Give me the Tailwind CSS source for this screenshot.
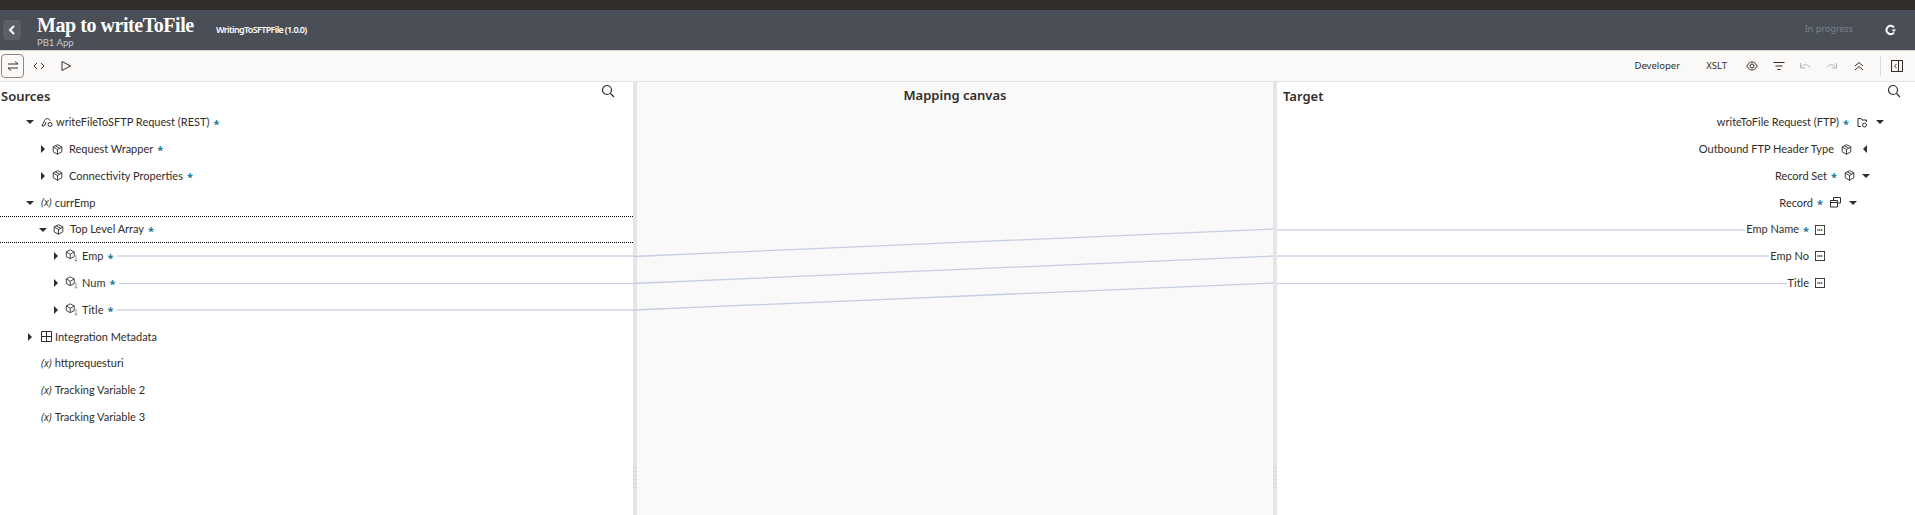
<!DOCTYPE html>
<html lang="en">
<head>
    <meta charset="UTF-8">
    <title>Map to writeToFile</title>
    <script src="https://cdn.jsdelivr.net/npm/@tailwindcss/browser@4"></script>
</head>
<body class="h-[515px] overflow-hidden bg-white font-['Lato',sans-serif] text-[11px] text-[#312d2a]">
    <!-- hidden icon defs -->
    <svg class="hidden">
        <symbol id="cube" viewBox="0 0 12 12"><path d="M6 .8 10.700 3V8.500L6 11.200 1.300 8.500V3ZM1.300 3.300 6 6 10.700 3.300M6 6V11.200M3.600 2 8.300 4.600" fill="none" stroke="currentColor" stroke-width="1"/></symbol>
        <symbol id="cubelist" viewBox="0 0 16 16"><path d="M6 1 10.500 3.300V8.700L6 11 1.500 8.700V3.300ZM1.500 3.300 6 6 10.500 3.300M6 6V11" fill="none" stroke="currentColor" stroke-width="1"/><path d="M12.500 7V14M11 12.500 12.500 14 14 12.500" fill="none" stroke="#888" stroke-width="1"/></symbol>
        <symbol id="abc" viewBox="0 0 11 11"><rect x=".5" y=".5" width="10" height="10" fill="none" stroke="currentColor"/><path d="M2.500 5.500H8.500" stroke="#777" stroke-width="2" stroke-dasharray="1.500 .5"/></symbol>
    </svg>

    <div class="h-[10px] bg-[#312d2a]"></div>

    <!-- title bar -->
    <header class="flex h-[40px] items-center bg-[#4a4e57] text-white">
        <button class="ml-[3px] flex h-[20px] w-[18px] items-center justify-center rounded-sm bg-[#5b5f67]">
            <svg width="8" height="10" viewBox="0 0 8 10"><path d="M6 1 2 5 6 9" fill="none" stroke="white" stroke-width="2"/></svg>
        </button>
        <div class="ml-[16px] w-[179px]">
            <div class="font-['Liberation_Serif',serif] text-[20px] leading-[24px] font-bold tracking-[-0.45px]">Map to writeToFile</div>
            <div class="text-[9.500px] leading-[11px] text-[#c9c9c9]">PB1 App</div>
        </div>
        <div class="mb-[1px] font-['Noto_Sans',sans-serif] text-[9px] font-semibold tracking-[-0.65px]">WritingToSFTPFile (1.0.0)</div>
        <div class="ml-auto mb-[2px] font-['Noto_Sans',sans-serif] text-[9px] text-[#7d8087]">In progress</div>
        <svg class="mr-[19px] ml-[31px]" width="12" height="12" viewBox="0 0 12 12"><path d="M10 3.500A4.200 4.200 0 1 0 10 8.500" fill="none" stroke="white" stroke-width="2"/><path d="M7.500 5.500H12L10 8Z" fill="white"/></svg>
    </header>

    <!-- toolbar -->
    <div class="flex h-[32px] items-center border-y border-y-[#e5e3e1] border-t-[#d8d4c8] bg-[#fbf9f8] pr-[12px]">
        <button class="ml-[1px] flex h-[24px] w-[23px] items-center justify-center rounded-sm border border-[#8a8784]">
            <svg width="12" height="12" viewBox="0 0 12 12"><path d="M1 4H11M8 1.500 11 4M11 8H1M4 10.500 1 8" fill="none" stroke="#312d2a"/></svg>
        </button>
        <svg class="ml-[9px]" width="12" height="12" viewBox="0 0 12 12"><path d="M4 3 1 6 4 9M8 3 11 6 8 9" fill="none" stroke="#312d2a"/></svg>
        <svg class="ml-[15px]" width="12" height="12" viewBox="0 0 12 12"><path d="M2 1.500 10.500 6 2 10.500Z" fill="none" stroke="#312d2a"/></svg>
        <span class="ml-auto font-['Noto_Sans',sans-serif] text-[9.500px]">Developer</span>
        <span class="ml-[26px] font-['Noto_Sans',sans-serif] text-[9.500px]">XSLT</span>
        <svg class="ml-[19px]" width="12" height="12" viewBox="0 0 12 12"><path d="M.8 6C2.500 3 4.200 2 6 2S9.500 3 11.200 6C9.500 9 7.800 10 6 10S2.500 9 .8 6Z" fill="none" stroke="#312d2a"/><circle cx="6" cy="6" r="2" fill="none" stroke="#312d2a"/></svg>
        <svg class="ml-[15px]" width="12" height="12" viewBox="0 0 12 12"><path d="M.5 2.500H11.500M2.500 6H9.500M4.500 9.500H7.500" fill="none" stroke="#312d2a"/></svg>
        <svg class="ml-[14px]" width="12" height="12" viewBox="0 0 12 12"><path d="M1.500 3V8H6.500M1.500 8C4 4 8.500 3.500 11 7.500" fill="none" stroke="#b8b6b4"/></svg>
        <svg class="ml-[15px]" width="12" height="12" viewBox="0 0 12 12"><path d="M10.500 3V8H5.500M10.500 8C8 4 3.500 3.500 1 7.500" fill="none" stroke="#b8b6b4"/></svg>
        <svg class="ml-[15px]" width="12" height="12" viewBox="0 0 12 12"><path d="M2 6 6 2.500 10 6M2 10 6 6.500 10 10" fill="none" stroke="#312d2a"/></svg>
        <div class="mr-[10px] ml-[15px] h-[20px] w-px bg-[#dcdad8]"></div>
        <svg width="12" height="12" viewBox="0 0 12 12"><rect x=".5" y=".5" width="11" height="11" fill="none" stroke="#312d2a"/><path d="M7.500 .5V11.500M5.500 4 3.500 6 5.500 8" fill="none" stroke="#312d2a"/></svg>
    </div>

    <!-- mapper -->
    <main class="relative flex h-[434px]">
        <!-- sources -->
        <section class="relative w-[633px] shrink-0">
            <div class="relative flex h-[24px] items-end pl-[1px] font-['Noto_Sans',sans-serif]">
                <h2 class="text-[13px] leading-[19px] font-semibold">Sources</h2>
                <svg class="absolute top-[2px] right-[18px]" width="14" height="14" viewBox="0 0 14 14"><circle cx="6" cy="6" r="4.500" fill="none" stroke="#312d2a" stroke-width="1.200"/><path d="M9.500 9.500 13 13" stroke="#312d2a" stroke-width="1.200"/></svg>
            </div>
            <div class="flex flex-col pt-[3px]">
                <div class="flex h-[26.800px] items-center pl-[26px]">
                    <span class="mr-[7px] h-0 w-0 border-x-[4px] border-t-[4px] border-x-transparent border-t-[#312d2a]"></span>
                    <svg class="mr-[3px]" width="12" height="11" viewBox="0 0 12 11"><path d="M3 9H1L3.500 3.500C4.500 1 8 1 9 3.500M5 5 3.500 9" fill="none" stroke="#312d2a"/><circle cx="9" cy="7.500" r="2" fill="none" stroke="#312d2a"/></svg>
                    <span>writeFileToSFTP Request (REST)</span><span class="mt-[3px] ml-[4px] font-['Noto_Sans',sans-serif] text-[11px] font-bold text-[#15799b]">*</span>
                </div>
                <div class="flex h-[26.800px] items-center pl-[41px]">
                    <span class="mr-[7px] h-0 w-0 border-y-[4px] border-l-[4px] border-y-transparent border-l-[#312d2a]"></span>
                    <svg class="mr-[6px] h-[11px] w-[11px]"><use href="#cube"/></svg>
                    <span>Request Wrapper</span><span class="mt-[3px] ml-[4px] font-['Noto_Sans',sans-serif] text-[11px] font-bold text-[#15799b]">*</span>
                </div>
                <div class="flex h-[26.800px] items-center pl-[41px]">
                    <span class="mr-[7px] h-0 w-0 border-y-[4px] border-l-[4px] border-y-transparent border-l-[#312d2a]"></span>
                    <svg class="mr-[6px] h-[11px] w-[11px]"><use href="#cube"/></svg>
                    <span>Connectivity Properties</span><span class="mt-[3px] ml-[4px] font-['Noto_Sans',sans-serif] text-[11px] font-bold text-[#15799b]">*</span>
                </div>
                <div class="flex h-[26.800px] items-center pl-[26px]">
                    <span class="mr-[7px] h-0 w-0 border-x-[4px] border-t-[4px] border-x-transparent border-t-[#312d2a]"></span>
                    <span class="mr-[3px] font-['Noto_Sans',sans-serif] text-[10px] italic">(x)</span>
                    <span>currEmp</span>
                </div>
                <div class="flex h-[26.800px] items-center border-y border-dotted border-black pl-[39px]">
                    <span class="mr-[6px] h-0 w-0 border-x-[4px] border-t-[4px] border-x-transparent border-t-[#312d2a]"></span>
                    <svg class="mr-[6px] h-[11px] w-[11px]"><use href="#cube"/></svg>
                    <span>Top Level Array</span><span class="mt-[3px] ml-[4px] font-['Noto_Sans',sans-serif] text-[11px] font-bold text-[#15799b]">*</span>
                </div>
                <div class="flex h-[26.800px] items-center pl-[54px]">
                    <span class="mr-[7px] h-0 w-0 border-y-[4px] border-l-[4px] border-y-transparent border-l-[#312d2a]"></span>
                    <svg class="mr-[3px] h-[14px] w-[14px]"><use href="#cubelist"/></svg>
                    <span>Emp</span><span class="mx-[4px] mt-[3px] font-['Noto_Sans',sans-serif] text-[11px] font-bold text-[#15799b]">*</span><span class="h-[2px] flex-1 bg-[#dae0eb]"></span>
                </div>
                <div class="flex h-[26.800px] items-center pl-[54px]">
                    <span class="mr-[7px] h-0 w-0 border-y-[4px] border-l-[4px] border-y-transparent border-l-[#312d2a]"></span>
                    <svg class="mr-[3px] h-[14px] w-[14px]"><use href="#cubelist"/></svg>
                    <span>Num</span><span class="mx-[4px] mt-[3px] font-['Noto_Sans',sans-serif] text-[11px] font-bold text-[#15799b]">*</span><span class="h-px flex-1 bg-[#c5cde0]"></span>
                </div>
                <div class="flex h-[26.800px] items-center pl-[54px]">
                    <span class="mr-[7px] h-0 w-0 border-y-[4px] border-l-[4px] border-y-transparent border-l-[#312d2a]"></span>
                    <svg class="mr-[3px] h-[14px] w-[14px]"><use href="#cubelist"/></svg>
                    <span>Title</span><span class="mx-[4px] mt-[3px] font-['Noto_Sans',sans-serif] text-[11px] font-bold text-[#15799b]">*</span><span class="h-[2px] flex-1 bg-[#dae0eb]"></span>
                </div>
                <div class="flex h-[26.800px] items-center pl-[28px]">
                    <span class="mr-[9px] h-0 w-0 border-y-[4px] border-l-[4px] border-y-transparent border-l-[#312d2a]"></span>
                    <svg class="mr-[3px]" width="11" height="11" viewBox="0 0 11 11"><path d="M.5.5H10.500V10.500H.5ZM5.500.5V10.500M.5 5.500H10.500" fill="none" stroke="#312d2a"/></svg>
                    <span>Integration Metadata</span>
                </div>
                <div class="flex h-[26.800px] items-center pl-[41px]"><span class="mr-[3px] font-['Noto_Sans',sans-serif] text-[10px] italic">(x)</span><span>httprequesturi</span></div>
                <div class="flex h-[26.800px] items-center pl-[41px]"><span class="mr-[3px] font-['Noto_Sans',sans-serif] text-[10px] italic">(x)</span><span>Tracking Variable 2</span></div>
                <div class="flex h-[26.800px] items-center pl-[41px]"><span class="mr-[3px] font-['Noto_Sans',sans-serif] text-[10px] italic">(x)</span><span>Tracking Variable 3</span></div>
            </div>
        </section>

        <!-- canvas -->
        <section class="relative flex-1 border-x-[4px] border-[#e5e5e5] bg-[#f9f9f9]">
            <h2 class="pt-[4px] text-center font-['Noto_Sans',sans-serif] text-[13px] leading-[19px] font-semibold">Mapping canvas</h2>
            <svg class="absolute top-0 left-[-4px] h-full w-[calc(100%+8px)]" viewBox="0 0 644 434" preserveAspectRatio="none">
                <path d="M0 174.500 640 147M0 201.500 640 174M0 228 640 201" fill="none" stroke="#c5cde0" stroke-width="1.300"/>
            </svg>
            <div class="absolute bottom-[25px] left-[-4px] h-[24px] w-[4px] bg-[repeating-linear-gradient(to_bottom,#d4d4d4_0,#d4d4d4_1px,transparent_1px,transparent_4px)]"></div>
            <div class="absolute right-[-4px] bottom-[25px] h-[24px] w-[4px] bg-[repeating-linear-gradient(to_bottom,#d4d4d4_0,#d4d4d4_1px,transparent_1px,transparent_4px)]"></div>
        </section>

        <!-- target -->
        <section class="relative w-[638px] shrink-0">
            <div class="relative flex h-[24px] items-end pl-[6px] font-['Noto_Sans',sans-serif]">
                <h2 class="text-[13px] leading-[19px] font-semibold">Target</h2>
                <svg class="absolute top-[2px] right-[14px]" width="14" height="14" viewBox="0 0 14 14"><circle cx="6" cy="6" r="4.500" fill="none" stroke="#312d2a" stroke-width="1.200"/><path d="M9.500 9.500 13 13" stroke="#312d2a" stroke-width="1.200"/></svg>
            </div>
            <div class="flex flex-col pt-[3px]">
                <div class="flex h-[26.800px] items-center justify-end pr-[31px]">
                    <span>writeToFile Request (FTP)</span><span class="mt-[3px] ml-[4px] font-['Noto_Sans',sans-serif] text-[11px] font-bold text-[#15799b]">*</span>
                    <svg class="mx-[8px]" width="11" height="11" viewBox="0 0 11 11"><path d="M4 9.500H1V1.500H4L5 3H9.500V5" fill="none" stroke="#312d2a"/><circle cx="7.500" cy="8" r="2" fill="none" stroke="#312d2a"/></svg>
                    <span class="h-0 w-0 border-x-[4px] border-t-[4px] border-x-transparent border-t-[#312d2a]"></span>
                </div>
                <div class="flex h-[26.800px] items-center justify-end pr-[48px]">
                    <span>Outbound FTP Header Type</span>
                    <svg class="mx-[7px] h-[11px] w-[11px]"><use href="#cube"/></svg>
                    <span class="ml-[4px] h-0 w-0 border-y-[4px] border-r-[4px] border-y-transparent border-r-[#312d2a]"></span>
                </div>
                <div class="flex h-[26.800px] items-center justify-end pr-[45px]">
                    <span>Record Set</span><span class="mt-[3px] ml-[4px] font-['Noto_Sans',sans-serif] text-[11px] font-bold text-[#15799b]">*</span>
                    <svg class="mx-[7px] h-[11px] w-[11px]"><use href="#cube"/></svg>
                    <span class="h-0 w-0 border-x-[4px] border-t-[4px] border-x-transparent border-t-[#312d2a]"></span>
                </div>
                <div class="flex h-[26.800px] items-center justify-end pr-[58px]">
                    <span>Record</span><span class="mt-[3px] ml-[4px] font-['Noto_Sans',sans-serif] text-[11px] font-bold text-[#15799b]">*</span>
                    <svg class="mr-[8px] ml-[7px]" width="11" height="11" viewBox="0 0 11 11"><path d="M3.500 3V.5H10.500V6H8M.5 3.500H7.500V10H.5ZM.5 5.500H7.500" fill="none" stroke="#312d2a"/></svg>
                    <span class="h-0 w-0 border-x-[4px] border-t-[4px] border-x-transparent border-t-[#312d2a]"></span>
                </div>
                <div class="flex h-[26.800px] items-center pr-[90px]">
                    <span class="h-[2px] flex-1 bg-[#dae0eb]"></span><span class="ml-px">Emp Name</span><span class="mt-[3px] ml-[4px] font-['Noto_Sans',sans-serif] text-[11px] font-bold text-[#15799b]">*</span>
                    <svg class="ml-[6px] h-[10px] w-[10px] text-[#312d2a]"><use href="#abc"/></svg>
                </div>
                <div class="flex h-[26.800px] items-center pr-[90px]">
                    <span class="h-[2px] flex-1 bg-[#dae0eb]"></span><span class="ml-px">Emp No</span>
                    <svg class="ml-[6px] h-[10px] w-[10px] text-[#312d2a]"><use href="#abc"/></svg>
                </div>
                <div class="flex h-[26.800px] items-center pr-[90px]">
                    <span class="h-px flex-1 bg-[#c5cde0]"></span><span class="ml-px">Title</span>
                    <svg class="ml-[6px] h-[10px] w-[10px] text-[#312d2a]"><use href="#abc"/></svg>
                </div>
            </div>
        </section>
    </main>
</body>
</html>
